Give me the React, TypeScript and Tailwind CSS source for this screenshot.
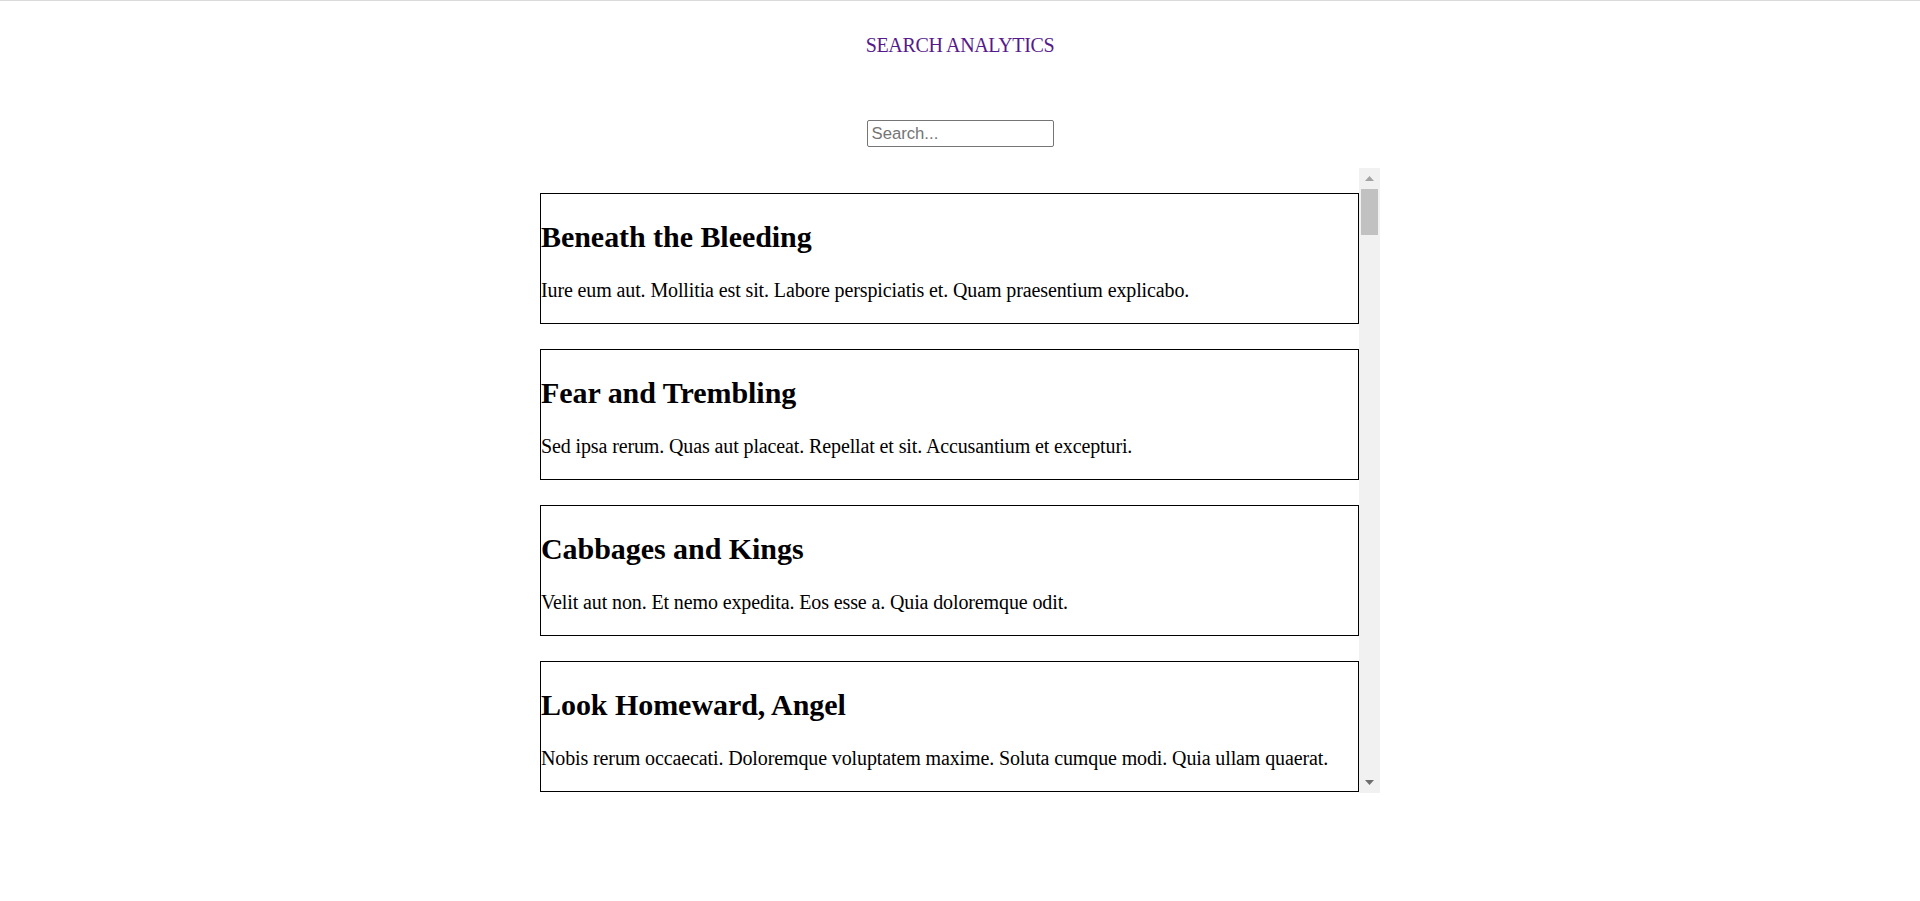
import React from "react";

const books = [
  {
    title: "Beneath the Bleeding",
    text: "Iure eum aut. Mollitia est sit. Labore perspiciatis et. Quam praesentium explicabo.",
  },
  {
    title: "Fear and Trembling",
    text: "Sed ipsa rerum. Quas aut placeat. Repellat et sit. Accusantium et excepturi.",
  },
  {
    title: "Cabbages and Kings",
    text: "Velit aut non. Et nemo expedita. Eos esse a. Quia doloremque odit.",
  },
  {
    title: "Look Homeward, Angel",
    text: "Nobis rerum occaecati. Doloremque voluptatem maxime. Soluta cumque modi. Quia ullam quaerat.",
  },
  {
    title: "The Waste Land",
    text: "Aut et voluptas. Quia est quo. Rerum dolorem et. Ut aut quia.",
  },
];

export default function App() {
  return (
    <div className="min-h-screen w-full bg-white border-t border-[#dadada] font-['Liberation_Serif',serif] text-black">
      <div className="flex flex-col items-center">
        <a
          href="#"
          className="mt-[33px] text-[20px] leading-[23px] tracking-[-0.35px] text-[#551a8b] no-underline"
        >
          SEARCH ANALYTICS
        </a>
        <input
          type="text"
          placeholder="Search..."
          className="mt-[63px] w-[187px] h-[27px] border border-[#767676] rounded-[2px] px-[4px] text-[16.7px] font-['Liberation_Sans',sans-serif] text-black placeholder:text-[#757575] outline-none bg-white"
        />
        <div className="mt-[21px] flex w-[840px] h-[625px]">
          <div className="flex-1 overflow-y-auto [scrollbar-width:none]">
            <div className="flex flex-col gap-[25px] pt-[25px]">
              {books.map((b) => (
                <div key={b.title} className="border border-black h-[131px] flex flex-col">
                  <h2 className="mt-[25px] text-[30px] leading-[35px] font-bold tracking-[-0.05px]">{b.title}</h2>
                  <p className="mt-[25px] text-[20px] leading-[23px] tracking-[-0.12px]">{b.text}</p>
                </div>
              ))}
            </div>
          </div>
          <div className="w-[21px] bg-[#f1f1f1] flex flex-col items-center">
            <div className="h-[21px] w-full flex items-center justify-center">
              <svg width="9" height="5" viewBox="0 0 9 5">
                <polygon points="4.5,0 9,5 0,5" fill="#a3a3a3" />
              </svg>
            </div>
            <div className="w-[17px] h-[46px] bg-[#c1c1c1]" />
            <div className="flex-1" />
            <div className="h-[21px] w-full flex items-center justify-center">
              <svg width="9" height="5" viewBox="0 0 9 5">
                <polygon points="0,0 9,0 4.5,5" fill="#6e6e6e" />
              </svg>
            </div>
          </div>
        </div>
      </div>
    </div>
  );
}
